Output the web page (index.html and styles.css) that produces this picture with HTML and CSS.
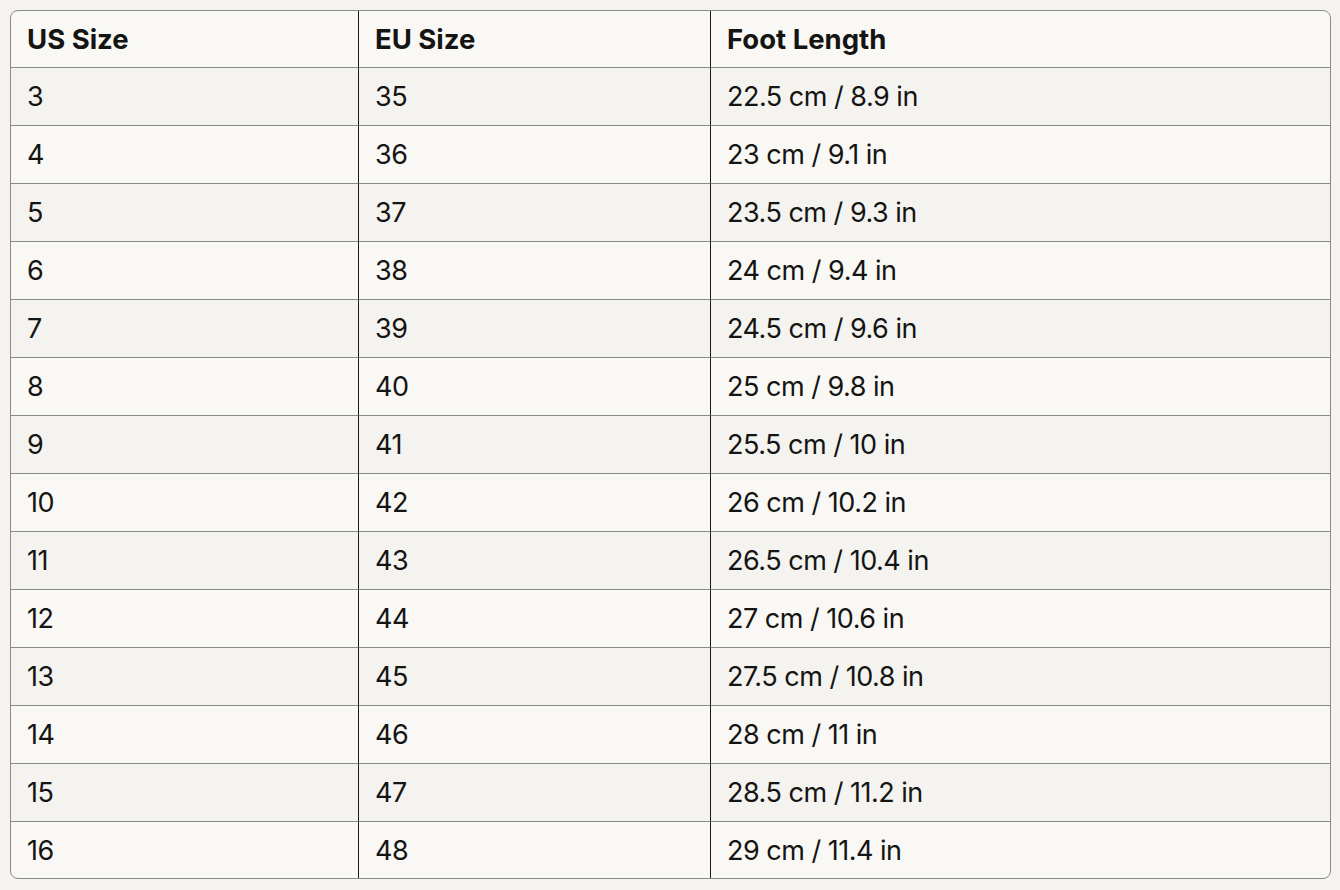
FILE: index.html
```html
<!DOCTYPE html>
<html>
<head>
<meta charset="utf-8">
<link rel="stylesheet" href="styles.css">
</head>
<body>
<div class="wrap">
<table class="sizes">
<thead>
<tr><th>US Size</th><th>EU Size</th><th>Foot Length</th></tr>
</thead>
<tbody>
<tr><td>3</td><td>35</td><td>22.5 cm / 8.9 in</td></tr>
<tr><td>4</td><td>36</td><td>23 cm / 9.1 in</td></tr>
<tr><td>5</td><td>37</td><td>23.5 cm / 9.3 in</td></tr>
<tr><td>6</td><td>38</td><td>24 cm / 9.4 in</td></tr>
<tr><td>7</td><td>39</td><td>24.5 cm / 9.6 in</td></tr>
<tr><td>8</td><td>40</td><td>25 cm / 9.8 in</td></tr>
<tr><td>9</td><td>41</td><td>25.5 cm / 10 in</td></tr>
<tr><td>10</td><td>42</td><td>26 cm / 10.2 in</td></tr>
<tr><td>11</td><td>43</td><td>26.5 cm / 10.4 in</td></tr>
<tr><td>12</td><td>44</td><td>27 cm / 10.6 in</td></tr>
<tr><td>13</td><td>45</td><td>27.5 cm / 10.8 in</td></tr>
<tr><td>14</td><td>46</td><td>28 cm / 11 in</td></tr>
<tr><td>15</td><td>47</td><td>28.5 cm / 11.2 in</td></tr>
<tr><td>16</td><td>48</td><td>29 cm / 11.4 in</td></tr>
</tbody>
</table>
</div>
</body>
</html>
```
FILE: styles.css
```css
html, body {
  margin: 0;
  padding: 0;
  background: #f4f3ef;
}
.wrap {
  padding: 10px 9px 0 10px;
}
.sizes {
  width: 1321px;
  border-collapse: separate;
  border-spacing: 0;
  border: 1px solid #8a8a88;
  border-radius: 8px;
  overflow: hidden;
  background: #f9f8f5;
  font-family: Inter, "Noto Sans", sans-serif;
  font-size: 27px;
  letter-spacing: -0.5px;
  color: #141413;
  table-layout: fixed;
}
.sizes th, .sizes td {
  height: 58px;
  padding: 0 0 0 16px;
  text-align: left;
  vertical-align: middle;
  box-sizing: border-box;
  border-bottom: 1px solid #8a8a88;
}
.sizes tbody tr:last-child td {
  border-bottom: none;
  height: 56px;
}
.sizes th:nth-child(1), .sizes td:nth-child(1) { width: 348px; }
.sizes th:nth-child(2), .sizes td:nth-child(2) { width: 352px; }
.sizes th:nth-child(1), .sizes th:nth-child(2),
.sizes td:nth-child(1), .sizes td:nth-child(2) {
  border-right: 1px solid #1a1a1a;
}
.sizes th {
  font-weight: 700;
  font-size: 27.5px;
  letter-spacing: 0;
  height: 57px;
}
.sizes tbody tr:nth-child(odd) td {
  background: #f4f3ef;
}
```
